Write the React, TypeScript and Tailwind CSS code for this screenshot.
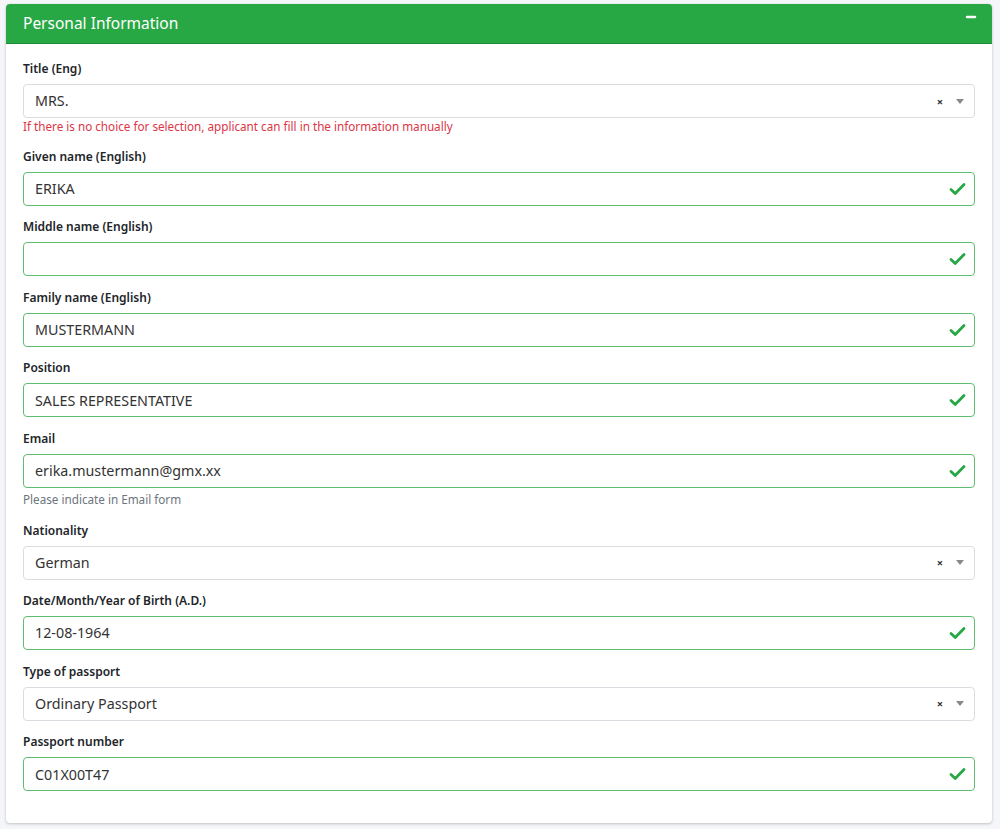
import { Minus } from 'lucide-react'

type Field = {
  label: string
  value: string
  kind: 'input' | 'select'
  help?: { text: string; tone: 'red' | 'gray' }
}

const fields: Field[] = [
  {
    label: 'Title (Eng)',
    value: 'MRS.',
    kind: 'select',
    help: { text: 'If there is no choice for selection, applicant can fill in the information manually', tone: 'red' },
  },
  { label: 'Given name (English)', value: 'ERIKA', kind: 'input' },
  { label: 'Middle name (English)', value: '', kind: 'input' },
  { label: 'Family name (English)', value: 'MUSTERMANN', kind: 'input' },
  { label: 'Position', value: 'SALES REPRESENTATIVE', kind: 'input' },
  {
    label: 'Email',
    value: 'erika.mustermann@gmx.xx',
    kind: 'input',
    help: { text: 'Please indicate in Email form', tone: 'gray' },
  },
  { label: 'Nationality', value: 'German', kind: 'select' },
  { label: 'Date/Month/Year of Birth (A.D.)', value: '12-08-1964', kind: 'input' },
  { label: 'Type of passport', value: 'Ordinary Passport', kind: 'select' },
  { label: 'Passport number', value: 'C01X00T47', kind: 'input' },
]

function Check() {
  return (
    <svg width="17" height="14" viewBox="0 0 17 14" className="shrink-0">
      <path d="M2 7.5 L6.2 11.5 L15 2.5" fill="none" stroke="#28a745" strokeWidth="2.8" strokeLinecap="round" strokeLinejoin="round" />
    </svg>
  )
}

function FormRow({ f }: { f: Field }) {
  return (
    <div className="flex flex-col">
      <label className="text-[12px] font-semibold text-[#212529] leading-[18px] mb-[6px]">{f.label}</label>
      {f.kind === 'select' ? (
        <div className="h-[34px] flex items-center border border-[#d9dce0] rounded-[4px] bg-white pl-[11px] pr-[10px]">
          <span className="flex-1 text-[14.3px] text-[#333]">{f.value}</span>
          <span className="text-[11px] font-bold text-[#333] mr-[13px] leading-none">×</span>
          <span className="w-0 h-0 border-l-[4px] border-r-[4px] border-t-[5px] border-l-transparent border-r-transparent border-t-[#888]" />
        </div>
      ) : (
        <div className="h-[34px] flex items-center border border-[#5fbd70] rounded-[4px] bg-white pl-[11px] pr-[8px]">
          <span className="flex-1 text-[14.3px] text-[#333]">{f.value}</span>
          <Check />
        </div>
      )}
      {f.help && (
        <p
          className={
            f.help.tone === 'red'
              ? 'text-[11.7px] text-[#dc3545] leading-[16px] mb-[1px]'
              : 'text-[11.7px] text-[#6c757d] leading-[16px] mt-[3px] mb-[2px]'
          }
        >
          {f.help.text}
        </p>
      )}
    </div>
  )
}

export default function App() {
  return (
    <div
      className="min-h-screen bg-[#f4f6f9] pt-[4px] pl-[6px] pr-[8px]"
      style={{ fontFamily: '"Noto Sans", "Open Sans", sans-serif' }}
    >
      <div className="bg-white rounded-[4px] shadow-[0_0_1px_rgba(0,0,0,0.15),0_1px_3px_rgba(0,0,0,0.2)]">
        <div className="h-[40px] bg-[#28a745] border-b border-[#1e8a38] rounded-t-[4px] flex items-center justify-between pl-[17px] pr-[14px]">
          <h2 className="text-white text-[15.5px] font-normal">Personal Information</h2>
          <Minus className="w-[14px] h-[14px] text-white -mt-[14px]" strokeWidth={4} />
        </div>
        <div className="pt-[16px] pb-[32px] pl-[17px] pr-[17px] flex flex-col gap-[12.6px]">
          {fields.map(f => (
            <FormRow key={f.label} f={f} />
          ))}
        </div>
      </div>
    </div>
  )
}
